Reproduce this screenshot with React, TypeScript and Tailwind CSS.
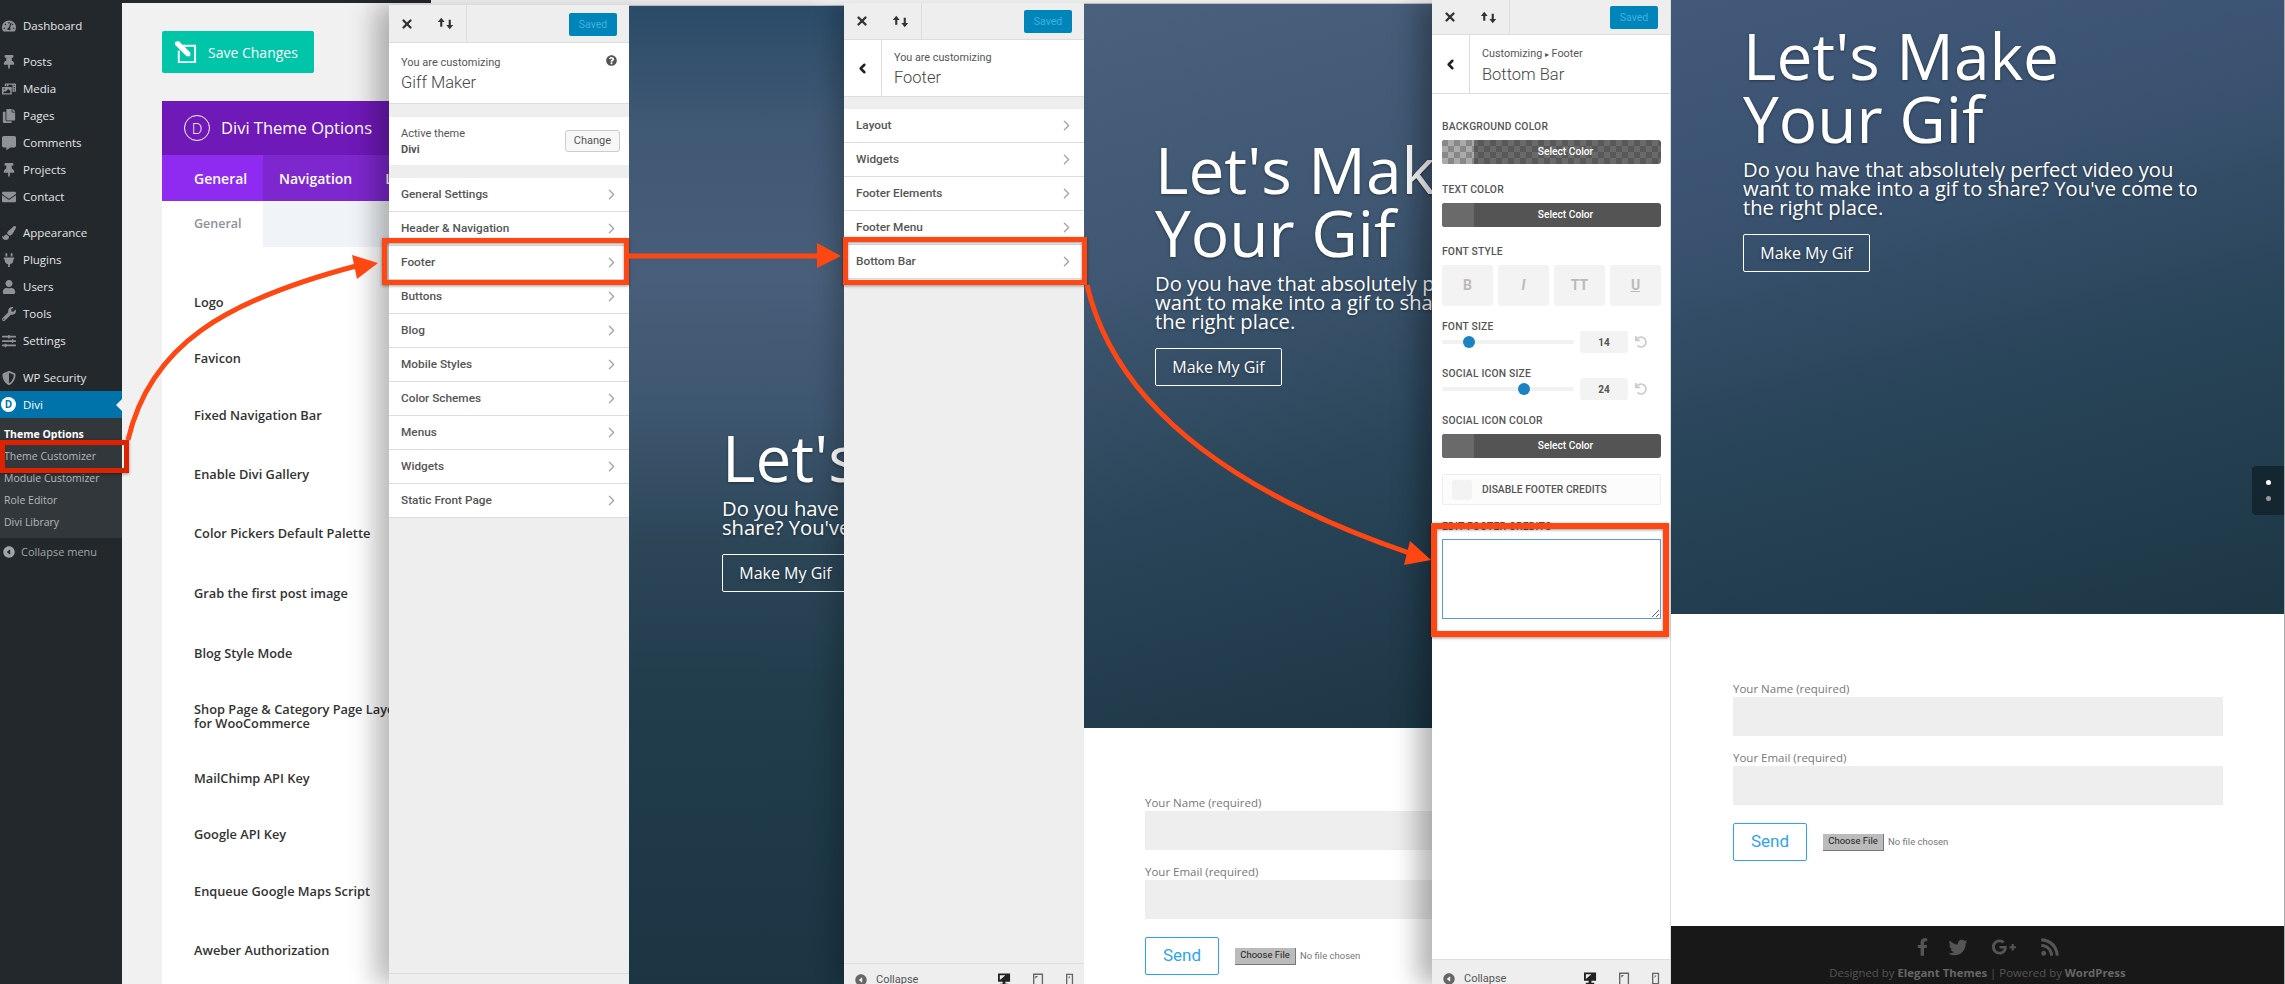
import React from "react";
import {
  FaTachometerAlt,
  FaThumbtack,
  FaCopy,
  FaCommentAlt,
  FaEnvelope,
  FaPaintBrush,
  FaPlug,
  FaUser,
  FaWrench,
  FaSlidersH,
  FaShieldAlt,
  FaPhotoVideo,
  FaFacebookF,
  FaTwitter,
  FaGooglePlusG,
  FaRss,
  FaQuestionCircle,
  FaUndo,
} from "react-icons/fa";
import { IoCaretBackCircle } from "react-icons/io5";
import { FiChevronRight, FiChevronLeft, FiX } from "react-icons/fi";

const sideTop = [
  { label: "Dashboard", Icon: FaTachometerAlt, cls: "mt-[9px]" },
  { label: "Posts", Icon: FaThumbtack, cls: "mt-[9px]" },
  { label: "Media", Icon: FaPhotoVideo, cls: "" },
  { label: "Pages", Icon: FaCopy, cls: "" },
  { label: "Comments", Icon: FaCommentAlt, cls: "" },
  { label: "Projects", Icon: FaThumbtack, cls: "" },
  { label: "Contact", Icon: FaEnvelope, cls: "" },
  { label: "Appearance", Icon: FaPaintBrush, cls: "mt-[9px]" },
  { label: "Plugins", Icon: FaPlug, cls: "" },
  { label: "Users", Icon: FaUser, cls: "" },
  { label: "Tools", Icon: FaWrench, cls: "" },
  { label: "Settings", Icon: FaSlidersH, cls: "" },
  { label: "WP Security", Icon: FaShieldAlt, cls: "mt-[10px]" },
];

const options = [
  { label: "Logo", cls: "h-[56px]" },
  { label: "Favicon", cls: "h-[56px]" },
  { label: "Fixed Navigation Bar", cls: "h-[58px]" },
  { label: "Enable Divi Gallery", cls: "h-[59px]" },
  { label: "Color Pickers Default Palette", cls: "h-[60px]" },
  { label: "Grab the first post image", cls: "h-[60px]" },
  { label: "Blog Style Mode", cls: "h-[60px]" },
  { label: "Shop Page & Category Page Layout for WooCommerce", cls: "h-[66px]" },
  { label: "MailChimp API Key", cls: "h-[57px]" },
  { label: "Google API Key", cls: "h-[56px]" },
  { label: "Enqueue Google Maps Script", cls: "h-[58px]" },
  { label: "Aweber Authorization", cls: "h-[59px]" },
];

function SaveIcon() {
  return (
    <svg viewBox="0 0 26 26" className="h-[25px] w-[25px]" fill="none" stroke="white" strokeWidth="2">
      <path d="M8 6h15v17H6V11" />
      <path d="M2 2l4-1 12 12 0 4-4 0L2 5z" fill="white" stroke="none" />
    </svg>
  );
}

function ArrowsIcon() {
  return (
    <svg viewBox="0 0 16 12" className="h-[13px] w-[17px]" fill="#333">
      <path d="M4 0.500L0.800 4.500H3V9H5V4.500H7.200z" />
      <path d="M12 11.500L8.800 7.500H11V2.500H13V7.500H15.200z" />
    </svg>
  );
}

function TopBar({ cls, savedCls }: { cls: string; savedCls: string }) {
  return (
    <div className={`flex shrink-0 items-start border-b border-[#ddd] bg-[#eee] ${cls}`}>
      <div className="flex h-full w-[36px] items-center justify-center">
        <FiX className="h-[14px] w-[14px] text-[#333]" strokeWidth={4} />
      </div>
      <div className="flex h-full w-[42px] items-center justify-center border-r border-[#ddd]">
        <ArrowsIcon />
      </div>
      <div className={`ml-auto mr-[12px] flex h-[23px] w-[48px] items-center justify-center rounded-[2px] bg-[#0085ba] text-[10.5px] text-[#3fb2df] ${savedCls}`}>
        Saved
      </div>
    </div>
  );
}

function NavRow({ label }: { label: string }) {
  return (
    <div className="flex h-[34px] items-center justify-between border-b border-[#ddd] bg-white pl-[12px] pr-[9px] text-[11.8px] font-medium text-[#555]">
      <span>{label}</span>
      <FiChevronRight className="h-[17px] w-[17px] text-[#a0a5aa]" strokeWidth={1.8} />
    </div>
  );
}

function BackHeader({ top, title, cls, textCls }: { top: React.ReactNode; title: string; cls: string; textCls: string }) {
  return (
    <div className={`flex shrink-0 border-b border-[#ddd] bg-white ${cls}`}>
      <div className="flex w-[38px] items-center justify-center border-r border-[#ddd]">
        <FiChevronLeft className="h-[15px] w-[15px] text-[#222]" strokeWidth={4} />
      </div>
      <div className={`pl-[12px] ${textCls}`}>
        <div className="text-[10.8px] leading-[16px] text-[#555]">{top}</div>
        <div className="mt-[1px] text-[16.5px] font-light leading-[22px] text-[#444]">{title}</div>
      </div>
    </div>
  );
}

function BottomBar({ cls }: { cls: string }) {
  return (
    <div className={`flex shrink-0 items-start overflow-hidden border-t border-[#ddd] bg-[#eee] pl-[10px] text-[11px] text-[#555] ${cls}`}>
      <IoCaretBackCircle className="h-[14px] w-[14px] text-[#666]" />
      <span className="ml-[8px] leading-[14px]">Collapse</span>
      <div className="ml-auto mr-[10px] flex items-center gap-[22px]">
        <svg viewBox="0 0 14 14" className="h-[14px] w-[13px]" fill="#222">
          <path d="M0 0h13v9H8v2h3v2H2v-2h3V9H0zM2 2v5l6-5z" fillRule="evenodd" />
        </svg>
        <svg viewBox="0 0 12 14" className="h-[14px] w-[11px]" fill="#666">
          <path d="M0 0h11v14H0zM1.500 1.500v11h8v-11zM2.500 2.500h3l-3 3z" fillRule="evenodd" />
        </svg>
        <svg viewBox="0 0 9 14" className="h-[14px] w-[8px]" fill="#666">
          <path d="M0 0h8v14H0zM1.500 1.500v10h5v-10zM3 3h2l-2 3z" fillRule="evenodd" />
        </svg>
      </div>
    </div>
  );
}

function FieldLabel({ children, cls }: { children: React.ReactNode; cls: string }) {
  return <div className={`text-[10.3px] font-medium uppercase leading-[14px] tracking-[0.2px] text-[#555] ${cls}`}>{children}</div>;
}

function ColorButton({ checker }: { checker?: boolean }) {
  return (
    <div
      className={`mt-[6px] flex h-[24px] w-[219px] overflow-hidden rounded-[3px] ${
        checker
          ? "bg-[repeating-conic-gradient(#6a6a6a_0_25%,#585858_0_50%)] bg-[length:12px_12px]"
          : "bg-[#545454]"
      }`}
    >
      <div
        className={`h-full w-[32px] ${
          checker
            ? "bg-[repeating-conic-gradient(#aaa_0_25%,#888_0_50%)] bg-[length:12px_12px]"
            : "bg-[#6a6a6a]"
        }`}
      />
      <div className="flex flex-1 items-center justify-center pr-[4px] text-[10.2px] font-medium text-white">Select Color</div>
    </div>
  );
}

function Slider({ thumb, value }: { thumb: string; value: string }) {
  return (
    <div className="mt-[-3px] flex items-center">
      <div className="relative h-[4px] w-[132px] rounded-full bg-[#f1f1f1]">
        <div className={`absolute top-[-4px] h-[12px] w-[12px] rounded-full bg-[#1a83c2] ${thumb}`} />
      </div>
      <div className="ml-[6px] flex h-[22px] w-[48px] items-center justify-center rounded-[3px] bg-[#f3f3f3] text-[10px] font-bold text-[#555]">
        {value}
      </div>
      <FaUndo className="ml-[7px] h-[12px] w-[12px] text-[#ccc]" />
    </div>
  );
}

function Hero({ cls, gradient, children }: { cls: string; gradient: string; children: React.ReactNode }) {
  return <div className={`shrink-0 overflow-hidden text-white ${gradient} ${cls}`}>{children}</div>;
}

function HeroText({ title, lines }: { title: string[]; lines: string[] }) {
  return (
    <div className="whitespace-nowrap [text-shadow:0_1px_3px_rgba(0,0,0,0.4)]">
      <div className="text-[64px] font-normal leading-[63px]">
        {title.map((t) => (
          <div key={t}>{t}</div>
        ))}
      </div>
      <div className="mt-[10px] text-[20.2px] leading-[19px]">
        {lines.map((t) => (
          <div key={t}>{t}</div>
        ))}
      </div>
      <div className="mt-[17px] flex h-[38px] w-[127px] items-center justify-center rounded-[2px] border border-white text-[16px]">
        Make My Gif
      </div>
    </div>
  );
}

function ContactForm({ cls }: { cls: string }) {
  return (
    <div className={`text-[11.5px] text-[#777] ${cls}`}>
      <div className="leading-[17px]">Your Name (required)</div>
      <div className="h-[39px] bg-[#eee]" />
      <div className="mt-[13px] leading-[17px]">Your Email (required)</div>
      <div className="h-[39px] bg-[#eee]" />
      <div className="mt-[18px] flex items-center">
        <div className="flex h-[38px] w-[74px] items-center justify-center rounded-[2px] border border-[#2ea3f2] font-['Roboto',sans-serif] text-[17px] text-[#2ea3f2]">
          Send
        </div>
        <div className="ml-[16px] flex h-[17px] w-[61px] items-center justify-center border-b border-r border-[#777] bg-[#bbb] font-['Roboto',sans-serif] text-[9.5px] text-[#222]">
          Choose File
        </div>
        <div className="ml-[4px] font-['Roboto',sans-serif] text-[9.5px] text-[#777]">No file chosen</div>
      </div>
    </div>
  );
}

export default function App() {
  return (
    <div className="relative h-[984px] w-[2285px] overflow-hidden bg-white font-['Open_Sans',sans-serif]">
      {/* wp admin screen */}
      <div className="absolute left-0 top-0 flex h-[984px] w-[400px]">
        <div className="flex w-[122px] shrink-0 flex-col bg-[#23282d] pt-[3px] text-[11.5px] font-medium text-[#e4e5e6]">
          {sideTop.map(({ label, Icon, cls }) => (
            <div key={label} className={`flex h-[27px] items-center ${cls}`}>
              <span className="flex w-[23px] justify-start pl-[2px]">
                <Icon className="h-[14px] w-[14px] text-[#8f9398]" />
              </span>
              <span>{label}</span>
            </div>
          ))}
          <div className="relative flex h-[27px] items-center bg-[#0073aa] text-white">
            <span className="ml-[1px] flex h-[15px] w-[15px] items-center justify-center rounded-full bg-white text-[10px] font-bold text-[#0073aa]">
              D
            </span>
            <span className="ml-[7px]">Divi</span>
            <div className="absolute right-0 top-[8px] h-0 w-0 border-y-[6px] border-r-[6px] border-y-transparent border-r-[#f1f1f1]" />
          </div>
          <div className="flex h-[120px] flex-col bg-[#32373c] pl-[4px] pt-[5px] text-[10.5px] font-normal leading-[22px] text-[#b4b9be]">
            <div className="font-bold text-white">Theme Options</div>
            <div>Theme Customizer</div>
            <div>Module Customizer</div>
            <div>Role Editor</div>
            <div>Divi Library</div>
          </div>
          <div className="flex h-[28px] items-center pl-[2px] text-[11px] font-normal text-[#a0a5aa]">
            <IoCaretBackCircle className="h-[14px] w-[14px] text-[#a0a5aa]" />
            <span className="ml-[5px]">Collapse menu</span>
          </div>
        </div>
        <div className="flex-1 bg-[#f1f1f1]">
          <div className="h-[3px] bg-[#23282d]" />
          <div className="pl-[40px] pt-[28px]">
            <div className="flex h-[42px] w-[152px] items-center rounded-[2px] bg-[#00c5a9] pl-[11px] text-[14px] text-white">
              <SaveIcon />
              <span className="ml-[10px]">Save Changes</span>
            </div>
            <div className="mt-[28px] flex h-[54px] items-center bg-[#6f19b8] pl-[22px] text-[16.5px] text-white">
              <span className="flex h-[26px] w-[26px] items-center justify-center rounded-full border border-white text-[15px] font-light">
                D
              </span>
              <span className="ml-[11px] whitespace-nowrap">Divi Theme Options</span>
            </div>
            <div className="flex h-[46px] items-center bg-[#7e27cf] text-[14px] font-semibold text-white">
              <div className="flex h-full w-[101px] items-center bg-[#8f2bf0] pl-[32px]">General</div>
              <div className="ml-[16px]">Navigation</div>
              <div className="ml-[33px]">Layout</div>
            </div>
            <div className="flex h-[46px] bg-[#f0f3f8]">
              <div className="flex w-[101px] items-center bg-white pl-[32px] text-[12.5px] font-semibold text-[#8a929c]">General</div>
            </div>
            <div className="h-[737px] bg-white pl-[32px] pt-[27px] text-[12.8px] font-semibold leading-[14px] text-[#333]">
              {options.map((o) => (
                <div key={o.label} className={`flex items-center ${o.cls}`}>
                  <span className="w-[222px]">{o.label}</span>
                </div>
              ))}
            </div>
          </div>
        </div>
      </div>

      {/* customizer, main panel */}
      <div className="absolute left-[389px] top-[5px] flex h-[979px] shadow-[-14px_0_24px_rgba(0,0,0,0.28)]">
        <div className="flex h-full w-[240px] flex-col bg-[#eee] font-['Roboto',sans-serif]">
          <TopBar cls="h-[38px]" savedCls="mt-[8px]" />
          <div className="relative h-[61px] shrink-0 border-b border-[#ddd] bg-white pl-[12px] pt-[12px]">
            <div className="text-[11px] leading-[16px] text-[#555]">You are customizing</div>
            <div className="mt-[1px] text-[16.5px] font-light leading-[22px] text-[#444]">Giff Maker</div>
            <FaQuestionCircle className="absolute right-[12px] top-[12px] h-[11px] w-[11px] text-[#555]" />
          </div>
          <div className="mt-[13px] flex h-[48px] shrink-0 items-center justify-between bg-white pl-[12px] pr-[9px]">
            <div className="pt-[1px] text-[11px] leading-[16px] text-[#555]">
              <div>Active theme</div>
              <div className="font-bold">Divi</div>
            </div>
            <div className="flex h-[22px] w-[55px] items-center justify-center rounded-[3px] border border-[#ccc] bg-[#f7f7f7] text-[11px] text-[#555]">
              Change
            </div>
          </div>
          <div className="mt-[13px] shrink-0">
            {["General Settings", "Header & Navigation", "Footer", "Buttons", "Blog", "Mobile Styles", "Color Schemes", "Menus", "Widgets", "Static Front Page"].map((n) => (
              <NavRow key={n} label={n} />
            ))}
          </div>
          <div className="flex-1" />
          <div className="h-[11px] shrink-0 border-t border-[#ddd] bg-[#eee]" />
        </div>
        <Hero
          cls="h-full w-[215px] border-t border-[#bbb] pl-[93px] pt-[420px]"
          gradient="bg-[linear-gradient(180deg,#2b4b68_0%,#3f5873_12%,#485e7a_28%,#3d566f_42%,#2c4658_55%,#213c4b_70%,#1b3543_100%)]"
        >
          <HeroText title={["Let's"]} lines={["Do you have that", "share? You've come"]} />
        </Hero>
      </div>

      {/* customizer, footer section */}
      <div className="absolute left-[844px] top-[3px] flex h-[981px] shadow-[-10px_0_20px_rgba(0,0,0,0.2)]">
        <div className="flex h-full w-[240px] flex-col bg-[#eee] font-['Roboto',sans-serif]">
          <TopBar cls="h-[37px]" savedCls="mt-[7px]" />
          <BackHeader cls="h-[57px]" textCls="pt-[10px]" top="You are customizing" title="Footer" />
          <div className="mt-[12px] shrink-0">
            {["Layout", "Widgets", "Footer Elements", "Footer Menu", "Bottom Bar"].map((n) => (
              <NavRow key={n} label={n} />
            ))}
          </div>
          <div className="flex-1" />
          <BottomBar cls="h-[21px] pt-[9px]" />
        </div>
        <div className="w-[348px] shrink-0 bg-white">
          <Hero
            cls="h-[725px] w-[348px] border-t border-[#bbb] pl-[71px] pt-[134px]"
            gradient="bg-[linear-gradient(165deg,#4a607c_0%,#3f5772_35%,#2a4559_65%,#1c3644_100%)]"
          >
            <HeroText
              title={["Let's Make", "Your Gif"]}
              lines={["Do you have that absolutely perfect", "want to make into a gif to share? You've", "the right place."]}
            />
          </Hero>
          <ContactForm cls="ml-[61px] mt-[66px] w-[400px]" />
        </div>
      </div>

      {/* customizer, bottom bar section */}
      <div className="absolute left-[1432px] top-0 flex h-[984px] shadow-[-14px_0_24px_rgba(0,0,0,0.3)]">
        <div className="flex h-full w-[239px] flex-col border-r border-[#ddd] bg-white font-['Roboto',sans-serif]">
          <TopBar cls="h-[35px]" savedCls="mt-[6px]" />
          <BackHeader
            cls="h-[59px]"
            textCls="pt-[11px]"
            top={
              <span>
                Customizing <span className="text-[8px]">▸</span> Footer
              </span>
            }
            title="Bottom Bar"
          />
          <div className="flex-1 pl-[10px] pt-[26px]">
            <FieldLabel cls="">Background Color</FieldLabel>
            <ColorButton checker />
            <FieldLabel cls="mt-[19px]">Text Color</FieldLabel>
            <ColorButton />
            <FieldLabel cls="mt-[18px]">Font Style</FieldLabel>
            <div className="mt-[6px] flex w-[219px] gap-[5px]">
              <div className="flex h-[41px] flex-1 items-center justify-center rounded-[3px] bg-[#f3f3f3] text-[14px] font-bold text-[#bbb]">B</div>
              <div className="flex h-[41px] flex-1 items-center justify-center rounded-[3px] bg-[#f3f3f3] text-[14px] font-bold italic text-[#bbb]">I</div>
              <div className="flex h-[41px] flex-1 items-center justify-center rounded-[3px] bg-[#f3f3f3] text-[14px] font-bold text-[#bbb]">TT</div>
              <div className="flex h-[41px] flex-1 items-center justify-center rounded-[3px] bg-[#f3f3f3] text-[14px] font-bold text-[#bbb] underline">U</div>
            </div>
            <FieldLabel cls="mt-[14px]">Font Size</FieldLabel>
            <Slider thumb="left-[21px]" value="14" />
            <FieldLabel cls="mt-[14px]">Social Icon Size</FieldLabel>
            <Slider thumb="left-[76px]" value="24" />
            <FieldLabel cls="mt-[14px]">Social Icon Color</FieldLabel>
            <ColorButton />
            <div className="mt-[16px] flex h-[31px] w-[219px] items-center rounded-[2px] border border-[#eee] bg-[#fcfcfc] pl-[9px]">
              <div className="h-[20px] w-[20px] rounded-[3px] bg-[#f3f3f3]" />
              <span className="ml-[10px] text-[10.3px] font-medium uppercase text-[#555]">Disable Footer Credits</span>
            </div>
            <FieldLabel cls="mt-[15px]">Edit Footer Credits</FieldLabel>
            <textarea readOnly className="mt-[5px] block h-[80px] w-[219px] border border-[#5b9dd9] bg-white" />
          </div>
          <BottomBar cls="h-[25px] pt-[12px]" />
        </div>
        <div className="flex w-[614px] shrink-0 flex-col border-r border-[#aaa] bg-white">
          <Hero
            cls="h-[614px] w-[613px] pl-[72px] pt-[24px]"
            gradient="bg-[linear-gradient(165deg,#42597a_0%,#3a5270_30%,#284458_60%,#1c3644_100%)]"
          >
            <HeroText
              title={["Let's Make", "Your Gif"]}
              lines={["Do you have that absolutely perfect video you", "want to make into a gif to share? You've come to", "the right place."]}
            />
          </Hero>
          <ContactForm cls="ml-[62px] mt-[66px] w-[490px]" />
          <div className="mt-auto flex h-[58px] flex-col items-center bg-[#181818] pt-[11px] text-[#555]">
            <div className="ml-[21px] flex items-center gap-[20px]">
              <FaFacebookF className="h-[20px] w-[11px]" />
              <FaTwitter className="h-[19px] w-[20px]" />
              <FaGooglePlusG className="h-[20px] w-[32px]" />
              <FaRss className="h-[20px] w-[20px]" />
            </div>
            <div className="mt-[9px] text-[11.4px] leading-[14px]">
              Designed by <span className="font-bold text-[#666]">Elegant Themes</span> | Powered by <span className="font-bold text-[#666]">WordPress</span>
            </div>
          </div>
        </div>
      </div>

      {/* page dot nav */}
      <div className="absolute left-[2252px] top-[466px] flex h-[49px] w-[32px] flex-col items-center justify-center gap-[11px] rounded-l-[4px] bg-[#14262f]">
        <div className="h-[5px] w-[5px] rounded-full bg-white" />
        <div className="h-[5px] w-[5px] rounded-full bg-[#999]" />
      </div>

      {/* annotations */}
      <div className="absolute left-0 top-[440px] h-[33px] w-[129px] border-[5px] border-[#dd2200] shadow-[0_1px_3px_rgba(0,0,0,0.4)]" />
      <div className="absolute left-[382px] top-[238px] h-[47px] w-[247px] border-[5px] border-[#ff4713] shadow-[0_1px_3px_rgba(0,0,0,0.4),inset_0_1px_3px_rgba(0,0,0,0.4)]" />
      <div className="absolute left-[843px] top-[237px] h-[48px] w-[244px] border-[5px] border-[#ff4713] shadow-[0_1px_3px_rgba(0,0,0,0.4),inset_0_1px_3px_rgba(0,0,0,0.4)]" />
      <div className="absolute left-[1431px] top-[523px] h-[114px] w-[238px] border-[6px] border-[#ff4713] shadow-[0_1px_3px_rgba(0,0,0,0.4),inset_0_1px_3px_rgba(0,0,0,0.4)]" />
      <svg className="pointer-events-none absolute left-0 top-0 h-[984px] w-[2285px]" viewBox="0 0 2285 984" fill="none">
        <path d="M128 440C150 345 225 300 360 265" stroke="#ff4713" strokeWidth="5" />
        <path d="M378 263L352 255L357 279z" fill="#ff4713" />
        <path d="M629 256H820" stroke="#ff4713" strokeWidth="5" />
        <path d="M841 256L817 243V268z" fill="#ff4713" />
        <path d="M1087 285C1115 405 1230 492 1412 554" stroke="#ff4713" strokeWidth="5" />
        <path d="M1431 560L1410 541L1404 565z" fill="#ff4713" />
      </svg>
    </div>
  );
}
